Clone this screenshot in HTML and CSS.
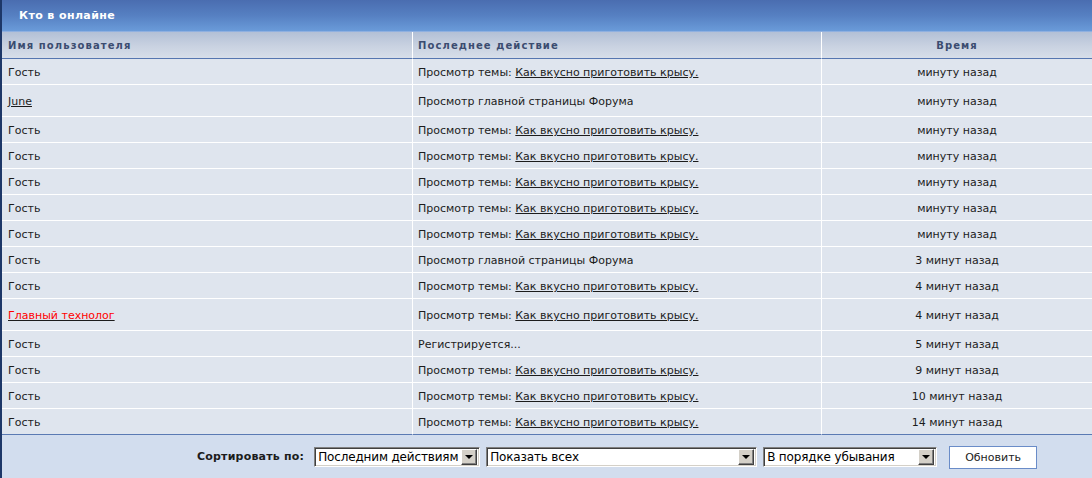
FILE: index.html
```html
<!DOCTYPE html>
<html lang="ru">
<head>
<meta charset="utf-8">
<title>Кто в онлайне</title>
<link rel="stylesheet" href="styles.css">
</head>
<body>
<div class="panel">
  <div class="title">Кто в онлайне</div>
  <table class="online">
    <colgroup>
      <col class="c-user">
      <col class="c-action">
      <col class="c-time">
    </colgroup>
    <thead>
      <tr>
        <th class="left">Имя пользователя</th>
        <th class="left">Последнее действие</th>
        <th class="center">Время</th>
      </tr>
    </thead>
    <tbody>
      <tr><td>Гость</td><td>Просмотр темы: <a href="#">Как вкусно приготовить крысу.</a></td><td class="center">минуту назад</td></tr>
      <tr class="tall"><td><a href="#">June</a></td><td>Просмотр главной страницы Форума</td><td class="center">минуту назад</td></tr>
      <tr><td>Гость</td><td>Просмотр темы: <a href="#">Как вкусно приготовить крысу.</a></td><td class="center">минуту назад</td></tr>
      <tr><td>Гость</td><td>Просмотр темы: <a href="#">Как вкусно приготовить крысу.</a></td><td class="center">минуту назад</td></tr>
      <tr><td>Гость</td><td>Просмотр темы: <a href="#">Как вкусно приготовить крысу.</a></td><td class="center">минуту назад</td></tr>
      <tr><td>Гость</td><td>Просмотр темы: <a href="#">Как вкусно приготовить крысу.</a></td><td class="center">минуту назад</td></tr>
      <tr><td>Гость</td><td>Просмотр темы: <a href="#">Как вкусно приготовить крысу.</a></td><td class="center">минуту назад</td></tr>
      <tr><td>Гость</td><td>Просмотр главной страницы Форума</td><td class="center">3 минут назад</td></tr>
      <tr><td>Гость</td><td>Просмотр темы: <a href="#">Как вкусно приготовить крысу.</a></td><td class="center">4 минут назад</td></tr>
      <tr class="tall"><td><a href="#" class="admin">Главный технолог</a></td><td>Просмотр темы: <a href="#">Как вкусно приготовить крысу.</a></td><td class="center">4 минут назад</td></tr>
      <tr><td>Гость</td><td>Регистрируется...</td><td class="center">5 минут назад</td></tr>
      <tr><td>Гость</td><td>Просмотр темы: <a href="#">Как вкусно приготовить крысу.</a></td><td class="center">9 минут назад</td></tr>
      <tr><td>Гость</td><td>Просмотр темы: <a href="#">Как вкусно приготовить крысу.</a></td><td class="center">10 минут назад</td></tr>
      <tr><td>Гость</td><td>Просмотр темы: <a href="#">Как вкусно приготовить крысу.</a></td><td class="center">14 минут назад</td></tr>
    </tbody>
  </table>
  <div class="footer">
    <span class="sort-label">Сортировать по:</span>
    <div class="select s1"><span class="value">Последним действиям</span><span class="arrow"></span></div>
    <div class="select s2"><span class="value">Показать всех</span><span class="arrow"></span></div>
    <div class="select s3"><span class="value">В порядке убывания</span><span class="arrow"></span></div>
    <button class="refresh" type="button">Обновить</button>
  </div>
</div>
</body>
</html>
```

FILE: styles.css
```css
html, body {
  margin: 0;
  padding: 0;
  background: #ffffff;
}

body {
  font-family: "DejaVu Sans", Verdana, sans-serif;
  font-size: 11px;
  color: #1c1c1c;
  overflow: hidden;
}

.panel {
  width: 1090px;
  border-left: 2px solid #1d3768;
}

.title {
  height: 31px;
  line-height: 32px;
  padding-left: 17px;
  color: #ffffff;
  font-weight: bold;
  font-size: 11px;
  letter-spacing: 0.4px;
  background: linear-gradient(to bottom, #4a6db0 0%, #5680c2 50%, #6a9bd9 100%);
  border-bottom: 1px solid #8fb0e0;
}

.online {
  width: 1090px;
  table-layout: fixed;
  border-collapse: separate;
  border-spacing: 0;
}

.c-user { width: 411px; }
.c-action { width: 409px; }
.c-time { width: 270px; }

.online th {
  height: 26px;
  padding: 0 6px;
  font-size: 10px;
  font-weight: bold;
  letter-spacing: 1.1px;
  color: #3b4c70;
  background: linear-gradient(to bottom, #b3c0d6 0%, #c9d2e1 55%, #d7dee9 100%);
  border-bottom: 1px solid #5676b0;
  border-right: 1px solid #ffffff;
  vertical-align: middle;
}

.online td {
  height: 25px;
  padding: 2px 6px 0;
  box-sizing: border-box;
  background: #dfe5ee;
  border-bottom: 1px solid #ffffff;
  border-right: 1px solid #ffffff;
  vertical-align: middle;
  white-space: nowrap;
}

.online td:first-child, .online th:first-child { padding-left: 6px; }
.online td:nth-child(2), .online th:nth-child(2) { padding-left: 5px; }
.online td:last-child, .online th:last-child { border-right: none; }

.online tbody tr:last-child td {
  border-bottom: 1px solid #5a7ab3;
}

.online tbody tr { height: 26px; }
.online tbody tr.tall { height: 32px; }

.online tr.tall td {
  height: 31px;
}

.left { text-align: left; }
.center { text-align: center; }

.online a {
  color: #1c1c1c;
  text-decoration: underline;
}

.online a.admin {
  color: #ff0000;
  text-decoration-color: #1c1c1c;
}

.footer {
  height: 43px;
  display: flex;
  align-items: center;
  padding-left: 195px;
  background: #d2ddee;
}

.sort-label {
  font-weight: bold;
  font-size: 11px;
  letter-spacing: 0.2px;
  color: #1c1c1c;
  margin-right: 10px;
}

.select {
  height: 20px;
  box-sizing: border-box;
  display: flex;
  align-items: center;
  background: #ffffff;
  border: 1px solid;
  border-color: #808080 #ffffff #ffffff #808080;
  box-shadow: inset 1px 1px 0 #404040, inset -1px -1px 0 #d4d0c8;
  padding: 2px 2px 2px 3px;
  margin-right: 6px;
  font-size: 12px;
  letter-spacing: -0.15px;
  color: #000000;
}

.select .value {
  flex: 1;
  white-space: nowrap;
  overflow: hidden;
  line-height: 16px;
}

.select .arrow {
  flex: none;
  width: 16px;
  height: 16px;
  box-sizing: border-box;
  background: #d4d0c8;
  border: 1px solid;
  border-color: #ffffff #404040 #404040 #ffffff;
  box-shadow: inset -1px -1px 0 #808080;
  display: flex;
  align-items: center;
  justify-content: center;
}

.select .arrow::after {
  content: "";
  width: 0;
  height: 0;
  border-left: 4px solid transparent;
  border-right: 4px solid transparent;
  border-top: 4px solid #000000;
  margin-top: 1px;
}

.s1 { width: 166px; }
.s2 { width: 271px; }
.s3 { width: 174px; margin-right: 12px; }

.refresh {
  width: 88px;
  height: 23px;
  background: #ffffff;
  border: 1px solid #6a8cc8;
  font-family: "DejaVu Sans", Verdana, sans-serif;
  font-size: 11px;
  color: #1c1c1c;
  padding: 0;
  margin-top: 1px;
}
```
